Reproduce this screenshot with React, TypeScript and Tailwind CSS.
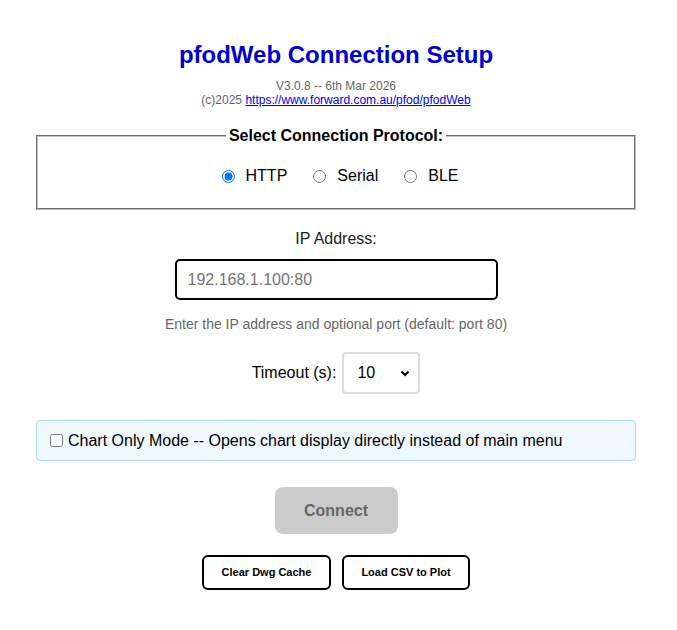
import React from "react";

export default function App() {
  return (
    <div className="min-h-[630px] w-full bg-white font-['Liberation_Sans',Arial,sans-serif] text-[#222]">
      <div className="ml-[36px] w-[600px] flex flex-col items-center pt-[41px]">
        <h1 className="text-[24px] leading-[28px] font-bold text-[#0000cc]">pfodWeb Connection Setup</h1>
        <div className="mt-[10px] text-[12px] leading-[14px] text-[#666] text-center">
          <div>V3.0.8 -- 6th Mar 2026</div>
          <div>
            (c)2025{" "}
            <a href="#" className="text-[#0000ee] underline">https://www.forward.com.au/pfod/pfodWeb</a>
          </div>
        </div>

        <fieldset className="mt-[20px] w-[600px] border-2 border-[#c0c0c0] [border-style:groove] pt-[22px] pb-[23px]">
          <legend className="mx-auto px-[3px] text-[16px] leading-[18px] font-bold text-black">Select Connection Protocol:</legend>
          <div className="flex justify-center items-center gap-[26px] ml-[8px] text-[16px] leading-[18px] text-black">
            <label className="flex items-center gap-[11px]">
              <input type="radio" name="proto" defaultChecked className="m-0 w-[13px] h-[13px]" />
              HTTP
            </label>
            <label className="flex items-center gap-[11px]">
              <input type="radio" name="proto" className="m-0 w-[13px] h-[13px]" />
              Serial
            </label>
            <label className="flex items-center gap-[11px]">
              <input type="radio" name="proto" className="m-0 w-[13px] h-[13px]" />
              BLE
            </label>
          </div>
        </fieldset>

        <div className="mt-[20px] text-[16px] leading-[18px] text-[#222]">IP Address:</div>
        <input
          type="text"
          placeholder="192.168.1.100:80"
          className="mt-[11px] w-[323px] h-[41px] border-2 border-black rounded-[5px] px-[11px] text-[16px] placeholder:text-[#757575] outline-none"
        />
        <div className="mt-[16px] text-[14px] leading-[16px] text-[#666]">Enter the IP address and optional port (default: port 80)</div>

        <div className="mt-[20px] flex items-center gap-[6px]">
          <span className="text-[16px] leading-[18px] text-black">Timeout (s):</span>
          <div className="relative">
            <select defaultValue="10" className="appearance-none w-[78px] h-[42px] border-2 border-[#ddd] rounded-[4px] pl-[13px] text-[16px] text-black bg-white outline-none">
              <option value="5">5</option>
              <option value="10">10</option>
              <option value="30">30</option>
            </select>
            <svg className="absolute right-[10px] top-[18px] pointer-events-none" width="10" height="7" viewBox="0 0 10 7">
              <path d="M1.5 1.5 L5 5 L8.5 1.5" fill="none" stroke="black" strokeWidth="2" />
            </svg>
          </div>
        </div>

        <div className="mt-[26px] w-[600px] h-[41px] flex items-center gap-[5px] pl-[13px] bg-[#f0f8ff] border border-[#add8e6] rounded-[4px]">
          <input type="checkbox" className="m-0 w-[13px] h-[13px]" />
          <span className="text-[16px] leading-[18px] text-black">Chart Only Mode -- Opens chart display directly instead of main menu</span>
        </div>

        <button className="mt-[26px] w-[123px] h-[47px] rounded-[8px] bg-[#cccccc] text-[#666] text-[16px] font-bold">Connect</button>

        <div className="mt-[21px] flex gap-[11px]">
          <button className="w-[129px] h-[35px] border-2 border-black rounded-[6px] bg-white text-[11px] font-bold text-black">Clear Dwg Cache</button>
          <button className="w-[128px] h-[35px] border-2 border-black rounded-[6px] bg-white text-[11px] font-bold text-black">Load CSV to Plot</button>
        </div>
      </div>
    </div>
  );
}
